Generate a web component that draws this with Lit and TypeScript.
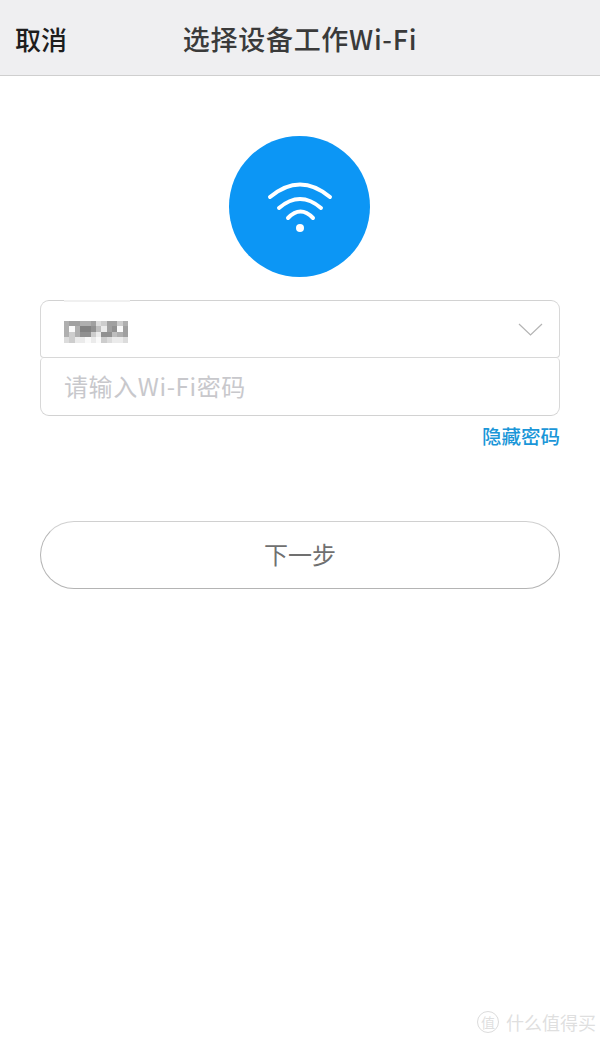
import { LitElement, html, css, svg } from "lit";
import { customElement } from "lit/decorators.js";

const GRID = [
  "a99aa9dc99ca",
  "afa778be98f9",
  "aca88ce88ba9",
  "dceefefcdeed",
];
const shade = (c: string) => {
  const v = 130 + (parseInt(c, 16) - 7) * 15;
  return `rgb(${v},${v},${v})`;
};

@customElement("app-root")
export class AppRoot extends LitElement {
  static styles = css`
    :host {
      display: block;
      width: 600px;
      height: 1040px;
      background: #fff;
      font-family: "Noto Sans CJK SC", "Liberation Sans", sans-serif;
      position: relative;
      overflow: hidden;
    }
    .bar {
      height: 75px;
      background: #efeff1;
      border-bottom: 1px solid #cfcfcf;
      display: grid;
      grid-template-columns: 1fr auto 1fr;
      align-items: center;
      padding: 0 15px;
    }
    .cancel { font-size: 26px; color: #1d1d1d; font-weight: 500; margin-top: 1px; }
    .title { font-size: 27px; color: #3a3a3a; font-weight: 500; letter-spacing: 0.700px; margin-top: 1px; }
    .main {
      display: flex;
      flex-direction: column;
      align-items: center;
      padding: 60px 40px 0;
    }
    .circle {
      width: 141px;
      height: 141px;
      border-radius: 50%;
      background: #0c96f5;
      margin: 0 1px 23px 0;
    }
    .circle svg { display: block; }
    .box {
      position: relative;
      width: 100%;
      height: 116px;
      display: flex;
      flex-direction: column;
    }
    .row {
      display: flex;
      align-items: center;
      justify-content: space-between;
      box-sizing: border-box;
      padding: 0 16px 0 23px;
      border: 1px solid #d8d8d8;
      border-top-color: #d2d2d2;
    }
    .row.first { flex: 0 0 58px; border-radius: 9px 9px 4px 4px; }
    .row.second {
      flex: 1;
      border-top: 0;
      border-bottom-color: #d2d2d2;
      border-radius: 4px 4px 9px 9px;
    }
    .smudge {
      position: absolute;
      left: 24px;
      top: 0;
      width: 66px;
      height: 2px;
      background: #f0f0f0;
    }
    .mosaic { margin-top: 5px; filter: blur(0.400px); }
    .chevron { margin-top: 2px; }
    .placeholder { font-size: 24px; color: #c8c8cc; letter-spacing: 0.600px; margin-top: -2px; }
    .toggle {
      align-self: flex-end;
      margin-top: 8px;
      font-size: 19.500px;
      line-height: 24px;
      color: #1a96d8;
      font-weight: 500;
    }
    .next {
      width: 100%;
      height: 68px;
      box-sizing: border-box;
      margin-top: 73px;
      border: 1px solid #b4b4b4;
      border-top-color: #d0d0d0;
      border-radius: 34px;
      background: #fff;
      font: inherit;
      font-size: 24px;
      color: #707070;
      padding: 0 0 4px;
    }
    .mark {
      position: absolute;
      right: 4px;
      bottom: 5px;
      display: flex;
      align-items: center;
      gap: 7px;
      color: #dfdfdf;
      font-size: 18px;
    }
    .seal {
      width: 22px;
      height: 22px;
      border: 1.500px solid #dcdcdc;
      border-radius: 50%;
      font-size: 14px;
      display: flex;
      align-items: center;
      justify-content: center;
      box-sizing: border-box;
    }
  `;

  render() {
    return html`
      <div class="bar">
        <span class="cancel">取消</span>
        <span class="title">选择设备工作Wi-Fi</span>
        <span></span>
      </div>
      <div class="main">
        <div class="circle">
          <svg width="141" height="141" viewBox="0 0 141 141" fill="none" stroke="#fff" stroke-width="4" stroke-linecap="round">
            <path d="M41 61 Q71 36 101 61" />
            <path d="M50 72 Q71 54 92 72" />
            <path d="M59 82 Q71.500 69 84 82" />
            <circle cx="71" cy="92" r="4" fill="#fff" stroke="none" />
          </svg>
        </div>
        <div class="box">
          <div class="row first">
            <svg class="mosaic" width="64" height="22" viewBox="0 0 64 22" shape-rendering="crispEdges">
              ${GRID.map((r, y) =>
                [...r].map(
                  (c, x) => svg`<rect x=${x * 5.34} y=${y * 5.34} width="5.500" height="5.500" fill=${shade(c)} />`
                )
              )}
            </svg>
            <svg class="chevron" width="25" height="14" viewBox="0 0 25 14" fill="none" stroke="#b4b4b4" stroke-width="1.200">
              <path d="M1 1 L12.500 12 L24 1" />
            </svg>
          </div>
          <div class="row second"><span class="placeholder">请输入Wi-Fi密码</span></div>
          <span class="smudge"></span>
        </div>
        <span class="toggle">隐藏密码</span>
        <button class="next">下一步</button>
      </div>
      <div class="mark"><span class="seal">值</span><span>什么值得买</span></div>
    `;
  }
}
